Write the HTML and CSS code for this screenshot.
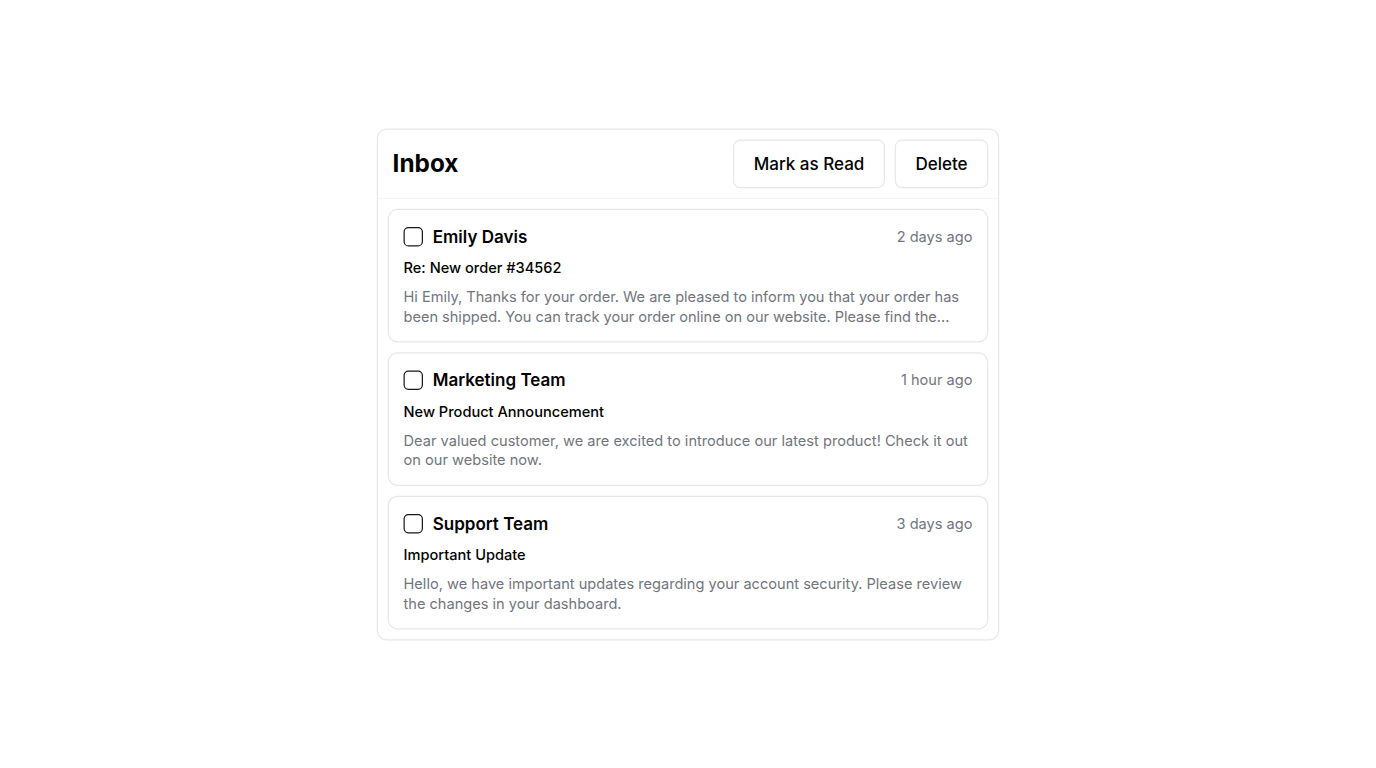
FILE: index.html
```html
<!DOCTYPE html>
<html lang="en">
<head>
<meta charset="utf-8">
<title>Inbox</title>
<link rel="stylesheet" href="styles.css">
</head>
<body>
<main class="inbox">
  <header class="inbox-header">
    <h1 class="title">Inbox</h1>
    <div class="actions">
      <button class="button">Mark as Read</button>
      <button class="button">Delete</button>
    </div>
  </header>
  <div class="messages">
    <article class="message">
      <div class="message-top">
        <button class="checkbox" role="checkbox" aria-checked="false" aria-label="Select Emily Davis"></button>
        <span class="sender">Emily Davis</span>
        <span class="time">2 days ago</span>
      </div>
      <div class="subject">Re: New order #34562</div>
      <p class="preview preview-tight">Hi Emily, Thanks for your order. We are pleased to inform you that your order has been shipped. You can track your order online on our website. Please find the...</p>
    </article>
    <article class="message">
      <div class="message-top">
        <button class="checkbox" role="checkbox" aria-checked="false" aria-label="Select Marketing Team"></button>
        <span class="sender">Marketing Team</span>
        <span class="time">1 hour ago</span>
      </div>
      <div class="subject">New Product Announcement</div>
      <p class="preview preview-loose">Dear valued customer, we are excited to introduce our latest product! Check it out on our website now.</p>
    </article>
    <article class="message">
      <div class="message-top">
        <button class="checkbox" role="checkbox" aria-checked="false" aria-label="Select Support Team"></button>
        <span class="sender">Support Team</span>
        <span class="time">3 days ago</span>
      </div>
      <div class="subject">Important Update</div>
      <p class="preview">Hello, we have important updates regarding your account security. Please review the changes in your dashboard.</p>
    </article>
  </div>
</main>
</body>
</html>
```
FILE: styles.css
```css
* { box-sizing: border-box; }

body {
  margin: 0;
  min-height: 100vh;
  display: flex;
  align-items: center;
  justify-content: center;
  background: #fff;
  color: #020202;
  font-family: Inter, sans-serif;
}

.inbox {
  width: 512px;
  border: 1px solid #e5e7eb;
  border-radius: 8px;
  transform: scale(1.2157);
}

.inbox-header {
  display: flex;
  align-items: center;
  justify-content: space-between;
  padding: 8px 8px 8px 12px;
  border-bottom: 1px solid #f3f4f6;
}

.title {
  margin: 0;
  font-size: 20px;
  line-height: 28px;
  font-weight: 700;
}

.actions { display: flex; gap: 8px; }

.button {
  height: 40px;
  padding: 0 16px;
  border: 1px solid #e5e7eb;
  border-radius: 6px;
  background: #fff;
  color: inherit;
  font: 500 14px/20px Inter, sans-serif;
}

.messages {
  display: grid;
  gap: 8px;
  padding: 8px;
}

.message {
  padding: 12px;
  border: 1px solid #e5e7eb;
  border-radius: 8px;
}

.message-top {
  display: flex;
  align-items: center;
  gap: 8px;
  height: 20px;
}

.checkbox {
  width: 16px;
  height: 16px;
  padding: 0;
  border: 1px solid #18181b;
  border-radius: 4px;
  background: #fff;
}

.sender { font-size: 14px; font-weight: 600; line-height: 20px; }

.time {
  margin-left: auto;
  color: #71757d;
  font-size: 12px;
  line-height: 16px;
}

.subject {
  margin-top: 8px;
  font-size: 12px;
  line-height: 16px;
  font-weight: 500;
}

.preview {
  margin: 8px 0 0;
  color: #71757d;
  font-size: 12px;
  line-height: 16px;
}

.preview-tight { letter-spacing: -0.018px; }
.preview-loose { letter-spacing: 0.01px; }
```
